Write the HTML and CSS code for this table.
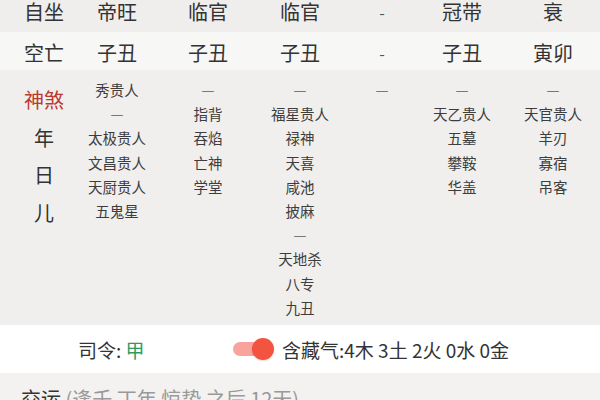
FILE: index.html
```html
<!DOCTYPE html>
<html lang="zh">
<head>
<meta charset="utf-8">
<link rel="stylesheet" href="styles.css">
</head>
<body>
<div class="page">
  <div class="row row-top">
    <div class="cell label">自坐</div>
    <div class="cell">帝旺</div>
    <div class="cell">临官</div>
    <div class="cell">临官</div>
    <div class="cell dash">-</div>
    <div class="cell">冠带</div>
    <div class="cell last">衰</div>
  </div>
  <div class="row row-kong">
    <div class="cell label">空亡</div>
    <div class="cell">子丑</div>
    <div class="cell">子丑</div>
    <div class="cell">子丑</div>
    <div class="cell dash">-</div>
    <div class="cell">子丑</div>
    <div class="cell last">寅卯</div>
  </div>
  <div class="row shensha">
    <div class="cell label-col">
      <span class="red">神煞</span>
      <span>年</span>
      <span>日</span>
      <span>儿</span>
    </div>
    <div class="cell list">
      <span>秀贵人</span><span class="em">—</span><span>太极贵人</span><span>文昌贵人</span><span>天厨贵人</span><span>五鬼星</span>
    </div>
    <div class="cell list">
      <span class="em">—</span><span>指背</span><span>吞焰</span><span>亡神</span><span>学堂</span>
    </div>
    <div class="cell list">
      <span class="em">—</span><span>福星贵人</span><span>禄神</span><span>天喜</span><span>咸池</span><span>披麻</span><span class="em">—</span><span>天地杀</span><span>八专</span><span>九丑</span>
    </div>
    <div class="cell list">
      <span class="em">—</span>
    </div>
    <div class="cell list">
      <span class="em">—</span><span>天乙贵人</span><span>五墓</span><span>攀鞍</span><span>华盖</span>
    </div>
    <div class="cell list last">
      <span class="em">—</span><span>天官贵人</span><span>羊刃</span><span>寡宿</span><span>吊客</span>
    </div>
  </div>
  <div class="bar">
    <div class="siling">司令: <span class="green">甲</span></div>
    <div class="toggle"><span class="track"></span><span class="knob"></span></div>
    <div class="canggan">含藏气:4木 3土 2火 0水 0金</div>
  </div>
  <div class="jiaoyun"><span class="strong">交运</span> (逢壬 丁年 惊蛰 之后 12天)</div>
</div>
</body>
</html>
```

FILE: styles.css
```css
* { box-sizing: border-box; }
html, body {
  margin: 0;
  padding: 0;
  width: 600px;
  height: 400px;
  overflow: hidden;
  background: #f2f1ef;
  font-family: "Noto Sans CJK SC", "Noto Sans", sans-serif;
  color: #333;
}
.page { width: 600px; }
.row {
  display: grid;
  grid-template-columns: 88px 58px 124px 60px 104px 56px 110px;
}
.cell { text-align: center; }
.cell.last { padding-left: 16px; }
.row-top {
  background: #efeeec;
  height: 32px;
  font-size: 20px;
  line-height: 24px;
}
.row-kong {
  background: #f7f7f6;
  height: 38px;
  padding-top: 9px;
  font-size: 20px;
  line-height: 24px;
}
.dash { color: #555; font-size: 16px; }
.shensha {
  background: #f0efed;
  height: 255px;
}
.label-col {
  display: flex;
  flex-direction: column;
  align-items: center;
  padding-top: 11px;
  font-size: 20px;
  line-height: 37.5px;
  color: #333;
}
.red { color: #b83a30; }
.list {
  display: flex;
  flex-direction: column;
  align-items: center;
  padding-top: 8px;
  font-size: 14.5px;
  line-height: 24.2px;
  color: #3d3d3d;
  white-space: nowrap;
}
.list .em { color: #777; }
.bar {
  background: #ffffff;
  height: 48px;
  display: flex;
  align-items: center;
  padding-left: 78px;
  font-size: 19px;
  color: #333;
}
.green { color: #2f9a62; }
.siling { width: 150px; }
.toggle {
  position: relative;
  width: 40px;
  height: 22px;
  margin-left: 5px;
  margin-right: 9px;
}
.track {
  position: absolute;
  left: 0;
  top: 4px;
  width: 32px;
  height: 14px;
  border-radius: 7px;
  background: #f8a49c;
}
.knob {
  position: absolute;
  left: 19px;
  top: 0;
  width: 22px;
  height: 22px;
  border-radius: 50%;
  background: #f2543f;
  box-shadow: 0 1px 2px rgba(0,0,0,0.15);
}
.jiaoyun {
  background: #f3f2f0;
  padding-left: 21px;
  padding-top: 12px;
  font-size: 20px;
  line-height: 28px;
  color: #999;
}
.strong { color: #333; }
```
